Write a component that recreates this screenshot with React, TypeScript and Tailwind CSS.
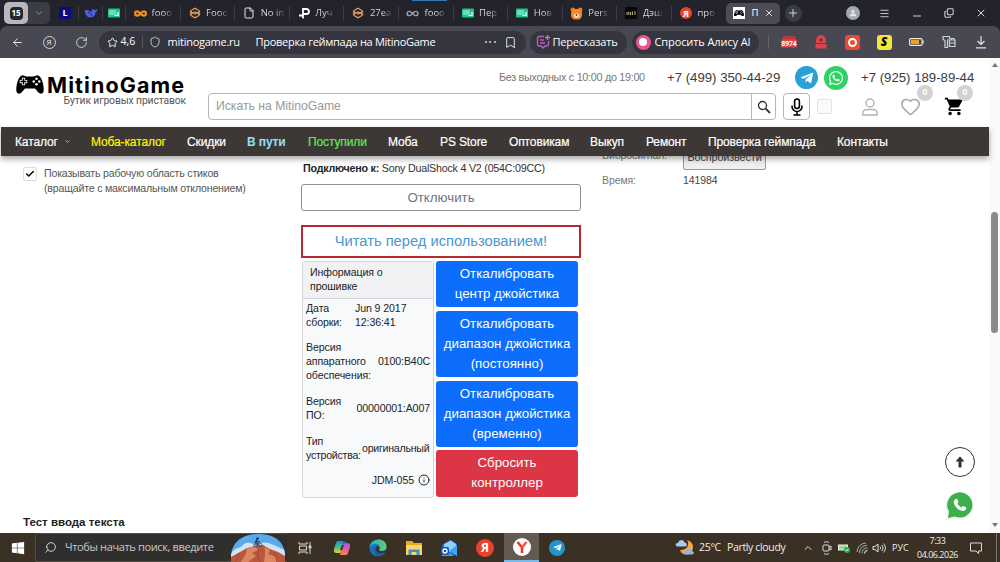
import React from "react";
import {
  ArrowLeft,
  Bookmark,
  Check,
  ChevronDown,
  ChevronUp,
  Copy,
  File,
  Heart,
  Infinity as InfinityIcon,
  Info,
  Menu,
  Minus,
  Plus,
  RotateCw,
  Search,
  Shield,
  Star,
  X,
} from "lucide-react";
import { FaTelegramPlane, FaWhatsapp, FaWindows } from "react-icons/fa";
import { MdShoppingCart } from "react-icons/md";

const Gamepad = ({ className }: { className?: string }) => (
  <svg viewBox="0 0 56 38" className={className}>
    <path
      d="M12 1 C15 -1 18 3 21 3 L35 3 C38 3 41 -1 44 1 C52 3 57 24 55 33 C54 38 48 39 44 34 L38 27 L18 27 L12 34 C8 39 2 38 1 33 C-1 24 4 3 12 1Z"
      fill="currentColor"
    />
    <path d="M15 5.500v15M7.500 13h15" stroke="#fff" strokeWidth="6.500" />
    <path d="M15 7v12M9 13h12" stroke="#000" strokeWidth="3" />
    <g fill="#fff">
      <circle cx="41" cy="7.500" r="2.5" />
      <circle cx="41" cy="18.500" r="2.5" />
      <circle cx="35.500" cy="13" r="2.5" />
      <circle cx="46.500" cy="13" r="2.5" />
    </g>
  </svg>
);

const Robot = () => (
  <svg viewBox="0 0 12 12" className="size-3" fill="none" stroke="#e8a064" strokeWidth="1.2">
    <path d="M6 1.200 10 3.500v5L6 10.800 2 8.500v-5Z" />
    <path d="M.8 4.500 6 7l5.200-2.500M.8 7.500 6 5l5.200 2.500" />
  </svg>
);

const GreenChat = () => (
  <svg viewBox="0 0 12 12" className="size-3">
    <rect x="0" y="1.500" width="12" height="9" rx="1" fill="#22c285" />
    <rect x="1" y="3" width="7" height="5" rx=".5" fill="#63e0c0" />
    <path d="M10 5v3.500H6.500" stroke="#fff" strokeWidth="1.2" fill="none" />
  </svg>
);

const Bear = () => (
  <svg viewBox="0 0 13 13" className="size-[13px]">
    <circle cx="2.8" cy="2.8" r="2.3" fill="#e8761a" />
    <circle cx="10.2" cy="2.8" r="2.3" fill="#e8761a" />
    <rect x="1" y="2" width="11" height="10.5" rx="4.5" fill="#f58b27" />
    <ellipse cx="6.5" cy="8.6" rx="2.7" ry="2.2" fill="#ffe6c7" />
    <circle cx="6.5" cy="8" r=".9" fill="#7a3708" />
  </svg>
);

const YaRed = ({ className }: { className?: string }) => (
  <span className={`flex items-center justify-center rounded-full bg-[#e8432e] font-bold leading-none text-white ${className}`}>
    Я
  </span>
);

const tabs = [
  { icon: <InfinityIcon className="size-[13px] text-[#e8912a]" strokeWidth={4} />, title: "fooo" },
  { icon: <Robot />, title: "Fooc" },
  { icon: <File className="size-3 text-gray-200" />, title: "No in" },
  {
    icon: (
      <svg viewBox="0 0 12 12" className="size-3" fill="none" stroke="#fff" strokeWidth="1.8">
        <path d="M1 8.5h3c1.200 0 1-1 1-2V2h3.500a2.200 2.200 0 0 1 0 5H5M5 8v3.500" />
      </svg>
    ),
    title: "Луч",
  },
  { icon: <Robot />, title: "27ea" },
  { icon: <InfinityIcon className="size-[13px] text-gray-400" strokeWidth={2.6} />, title: "fooo" },
  { icon: <GreenChat />, title: "Пер" },
  { icon: <GreenChat />, title: "Нов" },
  { icon: <Bear />, title: "Pers" },
  {
    icon: (
      <svg viewBox="0 0 12 12" className="size-3">
        <rect width="12" height="12" rx="1" fill="#070707" />
        <path d="M2 8V5M3.800 8V4.500M5.600 8V5M7.400 8V4.500M10 8V4" stroke="#d8c4a0" strokeWidth=".9" />
      </svg>
    ),
    title: "Дэш",
  },
  { icon: <YaRed className="size-3 text-[9px]" />, title: "про" },
];

const TabBar = () => (
  <div className="relative flex h-[26px] items-center bg-[#22232b] text-[9.5px] text-[#d3d4da]">
    <div className="absolute left-[412px] top-0 h-px w-[35px] bg-[#2f7cb8]"></div>
    <div className="ml-1 flex h-[22px] w-[46px] items-center rounded-[5px] bg-[#3b3c44]">
      <div className="flex h-[22px] w-6 items-center justify-center rounded-[5px] bg-[#b7b8bc]">
        <span className="flex h-[13px] w-[13px] items-center justify-center rounded-[4px] bg-[#26272d] text-[8px] font-bold text-white">15</span>
      </div>
      <ChevronDown className="ml-1.5 size-2.5 text-gray-400" />
    </div>
    <div className="flex h-full w-7 items-center justify-end pr-px">
      <span className="mr-1.5 flex size-3 items-center justify-center bg-[#0b0b86] text-[9px] font-bold text-white">L</span>
    </div>
    <div className="flex h-3.5 w-6 items-center justify-center border-l border-[#3c3d45]">
      <svg viewBox="0 0 14 12" className="h-3 w-3.5" fill="#4b62e0">
        <path d="M1 3c2 0 4 0 6 2 1-1 1-2 1-3.500 1 1 2 1.500 3 1.500l2.500-1C13 4 12.500 5 11.500 5.300c0 3-2 5.200-5 5.200C3 10.500.5 7 1 3Z" />
        <path d="M4 5c2 1 3 2 4 4" stroke="#22232b" fill="none" />
      </svg>
    </div>
    <div className="flex h-3.5 w-[23px] items-center justify-center border-l border-[#3c3d45]">
      <GreenChat />
    </div>
    {tabs.map((tab, i) => (
      <div key={i} className="flex h-3.5 w-[54.6px] shrink-0 items-center gap-[5px] border-l border-[#3c3d45] pl-[7.5px]">
        <span className="flex w-[13px] shrink-0 justify-center">{tab.icon}</span>
        <span className="whitespace-nowrap bg-linear-to-r from-[#e0e1e6] from-60% to-[#e0e1e6]/20 bg-clip-text text-transparent">
          {tab.title}
        </span>
      </div>
    ))}
    <div className="flex h-[21px] w-[54px] shrink-0 items-center rounded-[5px] bg-[#4b4c55] pl-[7px] text-white">
      <span className="flex size-3 items-center justify-center bg-white text-black">
        <Gamepad className="w-[10px]" />
      </span>
      <span className="ml-[7px] w-2">П</span>
      <X className="ml-1 size-2.5" />
    </div>
    <div className="ml-[5px] flex size-[17px] shrink-0 items-center justify-center rounded-full bg-[#3b3c44]">
      <Plus className="size-3" />
    </div>
    <div className="ml-auto flex h-full w-[163px] shrink-0 items-center">
      <div className="ml-[9px] flex size-3.5 items-center justify-center rounded-full bg-[#a4a6b3]">
        <svg viewBox="0 0 10 10" className="size-2" fill="#e4e5ec">
          <circle cx="5" cy="3" r="2" />
          <path d="M1 9c0-5 8-5 8 0Z" />
        </svg>
      </div>
      <Menu className="ml-[19px] size-[11px]" />
      <Minus className="ml-[21px] mt-1.5 size-3" />
      <Copy className="ml-[21px] size-[10px] -scale-x-100 rotate-180" strokeWidth={2.5} />
      <X className="ml-[21px] size-3" />
    </div>
  </div>
);

const Toolbar = () => (
  <div className="bg-[#22232b]">
    <div className="flex h-8 items-center rounded-t-[7px] bg-[#474851] text-[11px] text-white">
      <ArrowLeft className="ml-[11px] size-[13px] text-gray-200" strokeWidth={1.8} />
      <span className="ml-[18.5px] flex size-[13px] items-center justify-center rounded-full border border-gray-300 text-[8px] leading-none text-gray-200">Я</span>
      <RotateCw className="ml-[19px] size-[13px] text-gray-300" strokeWidth={1.8} />
      <div className="ml-[11px] flex h-[23px] w-[427px] items-center rounded-full bg-[#34353e] whitespace-nowrap">
        <Star className="ml-2 size-[11px]" />
        <span className="ml-[3px] w-[21px] text-[10.5px]">4,6</span>
        <span className="h-3 border-l border-[#55565f]"></span>
        <Shield className="ml-1.5 size-[12px] text-gray-300" strokeWidth={1.8} />
        <span className="ml-[7px] w-[88px] tracking-[-0.25px]">mitinogame.ru</span>
        <span className="w-[229px] tracking-[-0.28px]">Проверка геймпада на MitinoGame</span>
        <span className="flex w-[11px] justify-between">
          <i className="size-0.5 rounded-full bg-gray-300"></i>
          <i className="size-0.5 rounded-full bg-gray-300"></i>
          <i className="size-0.5 rounded-full bg-gray-300"></i>
        </span>
        <Bookmark className="ml-2 size-[13px] text-gray-200" strokeWidth={1.8} />
      </div>
      <div className="ml-[4px] flex h-[23px] w-[97px] items-center rounded-full bg-[#34353e] pl-[6px] whitespace-nowrap">
        <svg viewBox="0 0 14 14" className="size-3.5" fill="none" stroke="#b55fc0" strokeWidth="1.4">
          <path d="M8 1.500H3A1.500 1.500 0 0 0 1.500 3v6.500A1.500 1.500 0 0 0 3 11h2l2 2 2-2h2a1.500 1.500 0 0 0 1.500-1.500V6M4 5h4M4 8h5" />
          <path d="M11.500 0v5M9 2.500h5" stroke="#e76aa8" />
        </svg>
        <span className="ml-[3px] tracking-[-0.2px]">Пересказать</span>
      </div>
      <div className="ml-[5px] flex h-[23px] w-[127px] items-center rounded-full bg-[#34353e] pl-1 whitespace-nowrap">
        <span className="flex size-[15px] items-center justify-center rounded-full bg-[#e8568f]">
          <i className="size-[8px] rounded-full bg-white"></i>
        </span>
        <span className="ml-1 tracking-[-0.1px]">Спросить Алису AI</span>
      </div>
      <span className="ml-[9px] h-3.5 border-l border-[#62636b]"></span>
      <svg viewBox="0 0 18 14" className="ml-[11px] h-3.5 w-[18px]">
        <path d="M3 1h12l1 5H2Z" fill="#b83a40" />
        <rect y="4.500" x="1" width="16" height="8" rx="1" fill="#e0444b" />
        <text x="9" y="11" textAnchor="middle" fontSize="6.500" fontWeight="700" fill="#fff">8974</text>
      </svg>
      <svg viewBox="0 0 12 14" className="ml-[17px] h-3.5 w-3" fill="#d9434b">
        <path d="M1 6c0-8 10-8 10 0v2H1ZM.5 9h11v4.500H.5Z" />
        <circle cx="6" cy="5" r="1.400" fill="#6d2a33" />
      </svg>
      <span className="ml-[18px] flex size-[15px] items-center justify-center rounded-[3px] bg-[#ea4a35]">
        <i className="size-[9px] rounded-full border-2 border-white"></i>
      </span>
      <span className="ml-[17px] flex size-[15px] items-center justify-center rounded-[3px] bg-[#f4e63c] text-[12px] font-black italic leading-none text-black">S</span>
      <svg viewBox="0 0 15 8" className="ml-[17px] h-2 w-[15px]">
        <rect x=".6" y=".6" width="12.500" height="6.800" rx="1.200" fill="none" stroke="#f5e7d0" strokeWidth="1.200" />
        <rect x="2" y="2" width="8" height="4" fill="#f5a11c" />
        <path d="M14.200 2.500v3" stroke="#f5e7d0" />
      </svg>
      <svg viewBox="0 0 14 14" className="ml-[18px] size-3.5" fill="none" stroke="#d0d1d6" strokeWidth="1.200">
        <path d="M6.500 4.500 5.500 5v7.500H3V6L1 4V1.500h6.500V4" />
        <path d="M7.500 5H13v6.500H7.500ZM7.500 8H13M9 5V3.500h3V5" />
      </svg>
      <svg viewBox="0 0 12 14" className="ml-[19px] h-3.5 w-3" fill="none" stroke="#e0e1e6" strokeWidth="1.200">
        <path d="M6 1v8.500M2.500 6 6 9.500 9.500 6M1 12.800h10" />
      </svg>
    </div>
  </div>
);

const WhatsAppBubble = () => (
  <svg viewBox="0 0 30 30" className="size-[30px]">
    <path d="M1 29 3 21.500a13.300 13.300 0 1 1 5.500 5.300Z" fill="#f5faf5" stroke="#e3e9e3" strokeWidth=".6" />
    <path d="M3 27 4 20.500a12.600 12.600 0 1 1 5.500 4.900Z" fill="#3fae4e" />
    <path
      d="M10.500 8c.8-.6 1.500-.4 1.800.3l1 2.200c.2.600-.1 1-.9 2 1 1.900 2.300 3.100 4.200 3.900 1-1.200 1.300-1.500 1.900-1.200l2.300 1.100c.6.300.6.900.3 1.700-.7 1.600-2.500 2.300-4.300 1.800-4-1.100-7.200-4.100-8-7.700-.3-1.600.5-3.300 1.700-4.100Z"
      fill="#fff"
    />
  </svg>
);

const SiteHeader = () => (
  <header className="flex h-[69px] w-[989px] bg-white">
    <div className="ml-4 w-[192px] pt-[17px]">
      <div className="flex h-[19px] items-center">
        <Gamepad className="w-[28px]" />
        <span className="ml-[3px] font-[Inter] text-[21.5px] font-bold leading-[18px] tracking-[1.1px] text-black">MitinoGame</span>
      </div>
      <p className="w-[170px] pt-px text-right font-[Roboto] text-[10.3px] leading-[12px] tracking-[-0.1px] whitespace-nowrap text-[#555]">Бутик игровых приставок</p>
    </div>
    <div className="flex flex-1 flex-col">
      <div className="flex h-9 items-center pt-[3px] whitespace-nowrap text-[13.2px] text-[#3c3c3c]">
        <span className="ml-[291px] w-[168px] text-[10.8px] tracking-[-0.3px] text-[#777]">Без выходных с 10:00 до 19:00</span>
        <span className="w-[128px]">+7 (499) 350-44-29</span>
        <span className="flex size-[23px] items-center justify-center rounded-full bg-[#2a9fd8]">
          <FaTelegramPlane className="size-[14px] text-white" />
        </span>
        <span className="ml-1.5 flex size-6 items-center justify-center rounded-full bg-[#2bd366]">
          <FaWhatsapp className="size-4 text-white" />
        </span>
        <span className="ml-[13px]">+7 (925) 189-89-44</span>
      </div>
      <div className="flex h-[26px] items-center pb-px">
        <div className="flex h-[27px] w-[568px] rounded-[4px] border border-[#b5b5b5]">
          <span className="flex-1 pl-[7px] text-[12.2px] leading-[24px] text-[#999]">Искать на MitinoGame</span>
          <span className="flex w-6 items-center justify-center border-l border-[#b5b5b5]">
            <svg viewBox="0 0 14 14" className="size-3.5" fill="none" stroke="#333">
              <circle cx="5.500" cy="5.500" r="4" strokeWidth="1.300" />
              <path d="m8.500 8.500 4.500 4.500" strokeWidth="1.800" />
            </svg>
          </span>
        </div>
        <span className="ml-[7px] flex h-[27px] w-[27px] items-center justify-center rounded-[4px] border border-[#b5b5b5]">
          <svg viewBox="0 0 12 18" className="h-[18px] w-3" fill="none" stroke="#000" strokeWidth="1.600">
            <rect x="3.600" y="1" width="4.800" height="9.500" rx="2.400" />
            <path d="M1 7.500v1a5 5 0 0 0 10 0v-1M6 13.500V17M2.500 17h7" />
          </svg>
        </span>
        <span className="ml-[7px] size-[15px] rounded-[2px] border border-[#e2e2e2] bg-[#fafafa]"></span>
        <svg viewBox="0 0 16 18" className="ml-[30px] h-[18px] w-4" fill="none" stroke="#b4b4b4" strokeWidth="1.400">
          <circle cx="8" cy="5" r="4" />
          <path d="M.8 17v-1.500C.8 11.200 4 11.500 8 11.500s7.200-.3 7.200 4V17Z" />
        </svg>
        <span className="relative ml-[22px]">
          <Heart className="size-[21px] text-[#aaa]" strokeWidth={1.8} />
          <i className="absolute -top-[11px] left-[17px] flex size-4 items-center justify-center rounded-full bg-[#d2d2d2] text-[9px] font-bold not-italic text-white">0</i>
        </span>
        <span className="relative ml-[23px]">
          <MdShoppingCart className="size-[21px] text-black" />
          <i className="absolute -top-[11px] left-[13px] flex size-4 items-center justify-center rounded-full bg-[#d2d2d2] text-[9px] font-bold not-italic text-white">0</i>
        </span>
      </div>
    </div>
  </header>
);

const SiteNav = () => (
  <nav className="relative z-10 ml-px flex h-[29px] w-[988px] items-center bg-[#3d3836] pl-3.5 text-[12px] tracking-[-0.12px] whitespace-nowrap text-white shadow-[0_3px_6px_rgba(0,0,0,0.35)] [-webkit-text-stroke:0.2px]">
    <span className="flex w-[76px] items-center">
      Каталог <ChevronDown className="ml-1.5 size-[7px]" />
    </span>
    <span className="w-[96px] text-[#fbf500]">Моба-каталог</span>
    <span className="w-[60px]">Скидки</span>
    <span className="w-[61px] font-bold text-[#92e0f7] [-webkit-text-stroke:0]">В пути</span>
    <span className="w-[80px] text-[#5de85a]">Поступили</span>
    <span className="w-[52px]">Моба</span>
    <span className="w-[69px]">PS Store</span>
    <span className="w-[81px]">Оптовикам</span>
    <span className="w-[56px]">Выкуп</span>
    <span className="w-[62px]">Ремонт</span>
    <span className="w-[129px]">Проверка геймпада</span>
    <span>Контакты</span>
  </nav>
);

const FirmwareCard = () => (
  <div className="h-[237px] w-[132px] rounded-[3px] border border-[#d3d5d8] bg-[#f8f9fa] text-[10.6px] leading-[14px] tracking-[-0.1px] text-[#212529]">
    <div className="h-[37px] border-b border-[#d3d5d8] bg-[#f1f2f3] pt-[3px] pl-[7px]">
      Информация о
      <br />
      прошивке
    </div>
    <div className="flex h-[28px] items-center pt-[3px] pl-[3px]">
      <span className="w-[49px]">Дата сборки:</span>
      <span className="w-[60px]">Jun 9 2017 12:36:41</span>
    </div>
    <div className="mt-[13px] flex h-[42px] items-center justify-between pr-[3px] pl-[3px]">
      <span className="w-[66px]">Версия аппаратного обеспечения:</span>
      <span>0100:B40C</span>
    </div>
    <div className="mt-[12px] flex h-[28px] items-center justify-between pr-[3px] pl-[3px]">
      <span className="w-[40px]">Версия ПО:</span>
      <span>00000001:A007</span>
    </div>
    <div className="mt-[12px] flex h-[28px] items-center pl-[3px] tracking-[-0.25px]">
      <span className="w-[56px]">Тип устройства:</span>
      <span>оригинальный</span>
    </div>
    <div className="mt-[11px] flex items-center justify-end gap-1 pr-[3px]">
      JDM-055 <Info className="size-3" />
    </div>
  </div>
);

const Content = () => (
  <main className="flex h-[377px] w-[989px] overflow-hidden bg-white text-[#333]">
    <div className="ml-[23px] flex w-[278px] flex-col">
      <div className="mt-[10px] flex text-[10.6px] leading-[14.5px] tracking-[-0.19px] whitespace-nowrap text-[#555]">
        <span className="mt-px mr-[7px] flex size-[14px] items-center justify-center rounded-[2px] border border-[#ddd]">
          <Check className="size-[10px] text-black" strokeWidth={3.5} />
        </span>
        <span>
          Показывать рабочую область стиков
          <br />
          (вращайте с максимальным отклонением)
        </span>
      </div>
      <h2 className="mt-auto pb-1 text-[11.5px] font-bold leading-[14px] text-[#222]">Тест ввода текста</h2>
    </div>

    <div className="w-[280px]">
      <p className="mt-[5px] pl-[2px] text-[10.7px] leading-[14px] tracking-[-0.22px] whitespace-nowrap text-[#333]">
        <b className="text-[#212529]">Подключено к:</b> Sony DualShock 4 V2 (054C:09CC)
      </p>
      <div className="mt-[9px] flex h-[27px] items-center justify-center rounded-[3px] border border-[#8c9196] text-[13.3px] text-[#6c757d]">Отключить</div>
      <div className="mt-[14px] flex h-[33px] items-center justify-center border-2 border-[#b52a2c] text-[14.7px] text-[#4a97d2]">Читать перед использованием!</div>
      <div className="mt-[3px] flex gap-[2px] pl-[1px]">
        <FirmwareCard />
        <div className="flex w-[142px] flex-col gap-1 text-center text-[13.3px] leading-[20px] text-white [&>div]:rounded-[3px] [&>div]:pt-[3px]">
          <div className="h-[46px] bg-[#0d6efd]">
            Откалибровать
            <br />
            центр джойстика
          </div>
          <div className="h-[66px] bg-[#0d6efd]">Откалибровать диапазон джойстика (постоянно)</div>
          <div className="h-[66px] bg-[#0d6efd]">Откалибровать диапазон джойстика (временно)</div>
          <div className="-mt-px h-[47px] bg-[#dc3545]">
            Сбросить
            <br />
            контроллер
          </div>
        </div>
      </div>
    </div>

    <div className="ml-[21px] w-[250px] text-[10.5px] leading-[14px] tracking-[-0.1px] text-[#777]">
      <div className="-mt-2 flex">
        <span className="w-[81px]">Вибросигнал:</span>
        <span className="flex h-[22px] w-[83px] items-center justify-center rounded-[2px] border border-[#999] bg-[#efefef] pb-1 text-[10.8px] text-[#444]">Воспроизвести</span>
      </div>
      <div className="mt-[3px] flex">
        <span className="w-[81px]">Время:</span>
        <span className="text-[#444]">141984</span>
      </div>
    </div>

    <div className="ml-auto flex w-[44px] flex-col justify-end pb-[11px]">
      <span className="flex size-[30px] items-center justify-center rounded-full border-[1.500px] border-[#333]">
        <svg viewBox="0 0 12 12" className="size-3" fill="#333">
          <path d="M6 .5 10.500 5.500H7.500V11.500H4.500V5.500H1.500Z" />
        </svg>
      </span>
      <span className="mt-[14px] pb-px">
        <WhatsAppBubble />
      </span>
    </div>
  </main>
);

const Scrollbar = () => (
  <div className="flex w-[11px] flex-col items-center bg-[#fafafa]">
    <svg viewBox="0 0 6 4" className="mt-[5px] h-1 w-1.5" fill="#777">
      <path d="M3 0 6 4H0Z" />
    </svg>
    <div className="mt-[145px] h-[121px] w-[7px] rounded-full bg-[#8b8b8b]"></div>
    <svg viewBox="0 0 6 4" className="mt-auto mb-[6px] h-1 w-1.5" fill="#777">
      <path d="M3 4 6 0H0Z" />
    </svg>
  </div>
);

const Canyon = () => (
  <svg viewBox="0 0 54 28" className="h-7 w-[54px] shrink-0">
    <defs>
      <clipPath id="dome">
        <path d="M0 28C-2 8 12 0 27 0s29 6 27 28Z" />
      </clipPath>
    </defs>
    <g clipPath="url(#dome)">
      <rect width="54" height="28" fill="#5aa9e8" />
      <path d="M0 20c4-8 8-4 13-10 5-3 9 0 12 2 8-7 14-2 29 4v12H0Z" fill="#cfe3f5" />
      <path d="M0 23 9 18l7-4 8-2 8-1 7 4 8 3 7 4v8H0Z" fill="#b9583c" />
      <path d="m16 14 8-2 3 4-6 3 4 3-8 6H10l5-8ZM34 13l5 3-2 4 8 3v5H33l1-7Z" fill="#dc8662" />
      <path d="m8 19-3 9M28 15l-2 6 3 7M43 18l3 9" stroke="#a04a34" fill="none" />
      <circle cx="26.500" cy="4.500" r="1.200" fill="#222c48" />
      <path d="m26 5-1.500 3.500 2.500 1v2.500m-2-5 4 1" stroke="#263052" strokeWidth="1.200" fill="none" />
      <g fill="none" stroke="#263052" strokeWidth=".7">
        <circle cx="24.500" cy="11.500" r="1.600" />
        <circle cx="29.500" cy="11" r="1.600" />
      </g>
    </g>
  </svg>
);

const Taskbar = () => (
  <footer className="flex h-[29px] items-center bg-[#3a3024] font-['Open_Sans','Noto_Sans',sans-serif] text-[10.5px] whitespace-nowrap text-[#eee]">
    <span className="flex w-[35px] justify-center">
      <FaWindows className="size-[14px] text-white" />
    </span>
    <div className="flex h-full w-[252px] items-center border border-r-0 border-[#504b45] bg-[#312f2e]">
      <Search className="ml-2 size-[13px] -scale-x-100 text-gray-200" strokeWidth={1.6} />
      <span className="ml-2 w-[166px] text-[11px] tracking-[-0.36px] text-[#c8c8c8]">Чтобы начать поиск, введите</span>
      <Canyon />
    </div>
    <svg viewBox="0 0 14 14" className="ml-[11px] size-3.5" fill="none" stroke="#ddd">
      <path d="M1 1v2h8V1M1 13v-2h8v2M1.500 5h7v4h-7ZM12 1v12M11 5h2v2h-2Z" />
    </svg>
    <svg viewBox="0 0 18 18" className="ml-[21px] size-[18px]">
      <defs>
        <linearGradient id="cp1" x1="0" y1="0" x2="0" y2="1">
          <stop offset="0" stopColor="#1d8fe8" />
          <stop offset=".6" stopColor="#4fc86a" />
          <stop offset="1" stopColor="#f2cf31" />
        </linearGradient>
        <linearGradient id="cp2" x1="0" y1="0" x2="0" y2="1">
          <stop offset="0" stopColor="#9a60e6" />
          <stop offset=".6" stopColor="#ee5f8f" />
          <stop offset="1" stopColor="#f58a45" />
        </linearGradient>
      </defs>
      <path d="M5 2h6l-3.500 12H3.500C.5 14 .5 11 1.500 8.500L3 4c.4-1.300 1-2 2-2Z" fill="url(#cp1)" />
      <path d="M13 16H7l3.500-12h4c3 0 3 3 2 5.500L15 14c-.4 1.300-1 2-2 2Z" fill="url(#cp2)" />
      <path d="M10 2h1c2 0 2 1 2.500 2.500h-3c-1 0-1.500 1-2 3Z" fill="#1667c9" />
      <path d="m7 11 2-5h2l-2 5Z" fill="#3a3024" />
    </svg>
    <svg viewBox="0 0 18 18" className="ml-[18px] size-[18px]">
      <defs>
        <linearGradient id="edge" x1="0" y1="0" x2="1" y2="0">
          <stop offset="0" stopColor="#2a9fe0" />
          <stop offset="1" stopColor="#5fd765" />
        </linearGradient>
      </defs>
      <circle cx="9" cy="9" r="8.500" fill="#1474c4" />
      <path d="M.5 9C1-2 17-2 17.500 7.500c0 3-2.500 4.500-5 4.500s-2.500-1-2-2c1.500-3-1-5-4-5C3 5 .8 7 .5 9Z" fill="url(#edge)" />
      <path d="M7 8c-2 4 2 8 8.500 5.500l1.500 1 1-4-3 1.500H12c-3 0-2-2-1.500-2.500C11 8.500 9 6 7 8Z" fill="#3a3024" />
      <path d="M6.500 8c-3 3-1 9 4 9 2.500 0 4.500-1.500 5.500-3-4 1.500-10 0-9.500-6Z" fill="#1b5ba8" />
    </svg>
    <svg viewBox="0 0 18 16" className="ml-[18px] h-4 w-[18px]">
      <path d="M1 1h6l2 2h8v12H1Z" fill="#e3a92f" />
      <path d="M1 5h16v10H1Z" fill="#fbd561" />
      <path d="M3.500 15V9.500h11V15h-3v-3h-5v3Z" fill="#3f8fd0" />
    </svg>
    <svg viewBox="0 0 18 18" className="ml-[17px] size-[18px]">
      <path d="M2 6 10 .8 17 5v11H2Z" fill="#2467c8" />
      <path d="m4 5 7-3.500L16 5v4l-6 4-6-4Z" fill="#8fd0f8" />
      <path d="m17 6-8 6 8 5ZM2 8l12 9H2Z" fill="#3fa5ee" />
      <rect x="1" y="8" width="8" height="8" rx="1.500" fill="#1559b8" />
      <circle cx="5" cy="12" r="2" fill="none" stroke="#fff" strokeWidth="1.300" />
    </svg>
    <YaRed className="ml-[18px] size-[18px] text-[12px]" />
    <span className="ml-2.5 flex h-full w-[35px] items-center justify-center border-b-2 border-[#76b9ed] bg-[#635b51]">
      <svg viewBox="0 0 18 18" className="size-[18px]">
        <circle cx="9" cy="9" r="9" fill="#fff" />
        <path d="m4.500 4 4.500 5.500V15" fill="none" stroke="#e8392c" strokeWidth="2.600" />
        <path d="M13.500 4 9 9.500" stroke="#f0603b" strokeWidth="2.600" />
      </svg>
    </span>
    <span className="ml-2.5 flex size-4 items-center justify-center rounded-full bg-[#2694c8]">
      <FaTelegramPlane className="size-[9px] text-white" />
    </span>
    <svg viewBox="0 0 20 18" className="ml-auto h-[18px] w-5 shrink-0">
      <path d="M12 1c3 5 0 10-7 10 2 7 13 6 13-3 0-4-3-6-6-7Z" fill="#f5a83b" />
      <path d="M2.500 7.500C-.5 7 .5 3.500 3 4c1-4 6-4 6.500-.5 3 0 3 4 .5 4Z" fill="#a9c8f2" />
      <path d="M11 15.500c-3 0-3-3.500-.5-3.500.5-3.500 5.500-3 6 0 3 0 3 3.500.5 3.500Z" fill="#8fb6ec" />
    </svg>
    <span className="ml-1 w-[28px] shrink-0 tracking-[-0.3px]">25°C</span>
    <span className="w-[73px] shrink-0 tracking-[-0.35px]">Partly cloudy</span>
    <div className="flex h-full w-[200px] shrink-0 items-center">
      <ChevronUp className="ml-[2px] size-[12px]" strokeWidth={1.8} />
      <svg viewBox="0 0 10 14" className="ml-2 h-3.5 w-2.5" fill="none" stroke="#ddd">
        <rect x="1" y="4" width="6" height="6" rx="1" />
        <path d="M7 6l2-1v4L7 8M2 1.500c1.500-1 3.500-1 5 0M2 12.500c1.500 1 3.500 1 5 0" />
      </svg>
      <svg viewBox="0 0 12 12" className="ml-[6px] size-3">
        <rect x=".5" y="3" width="9" height="5" fill="#9ad89a" stroke="#eee" />
        <circle cx="9" cy="8" r="3" fill="#2fae4c" />
        <path d="m7.500 8 1 1 2-2" stroke="#fff" fill="none" />
      </svg>
      <svg viewBox="0 0 12 12" className="ml-[6px] size-3" fill="none" stroke="#aaa">
        <path d="M1 10A9 9 0 0 1 10 1M3.500 11A7 7 0 0 1 11 3.500M6 11.500A5 5 0 0 1 11.500 6" />
        <path d="M8.500 11.500a3 3 0 0 1 3-3" stroke="#fff" />
      </svg>
      <svg viewBox="0 0 14 12" className="ml-1 h-3 w-3.5" fill="none" stroke="#e5e5e5">
        <path d="M1 4.500h2L6 2v8L3 7.500H1ZM8 4.500c.8 1 .8 2 0 3M9.800 3c1.500 2 1.500 4 0 6M11.500 1.500c2.500 3 2.500 6 0 9" />
      </svg>
      <span className="ml-[6px] w-[21px] text-[9px]">РУС</span>
      <span className="ml-[3px] w-[43px] text-center text-[9px] leading-[14px] tracking-[-0.5px]">
        7:33
        <br />
        04.06.2026
      </span>
      <svg viewBox="0 0 12 12" className="ml-[11px] size-3" fill="none" stroke="#ddd">
        <path d="M.5 1h11v8h-3v2.500L6 9H.5Z" />
      </svg>
      <span className="ml-auto h-full w-1 border-l border-[#777]"></span>
    </div>
  </footer>
);

export default function App() {
  return (
    <div className="h-[562px] w-[1000px] overflow-hidden bg-white font-['Liberation_Sans',Arial,sans-serif]">
      <div className="font-['Open_Sans','Noto_Sans',sans-serif]">
        <TabBar />
        <Toolbar />
      </div>
      <div className="flex h-[475px]">
        <div className="w-[989px]">
          <SiteHeader />
          <SiteNav />
          <Content />
        </div>
        <Scrollbar />
      </div>
      <Taskbar />
    </div>
  );
}
